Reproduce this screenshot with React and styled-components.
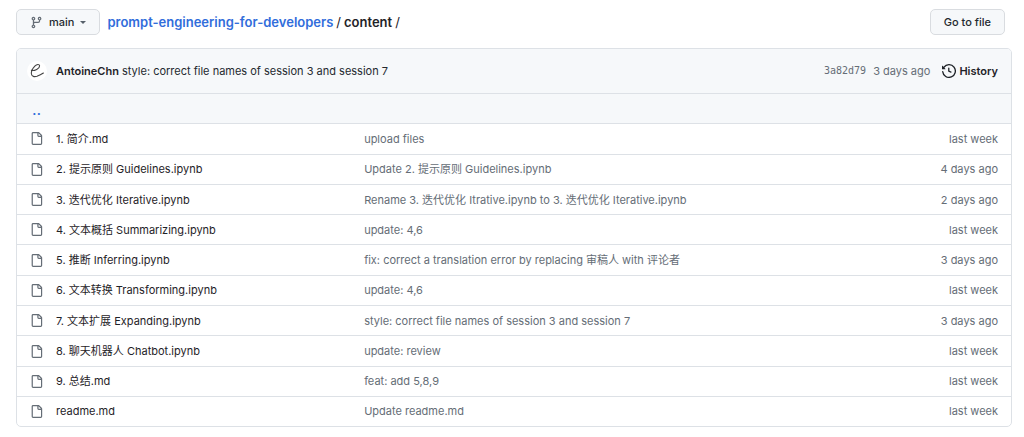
import React from 'react';
import styled, { createGlobalStyle } from 'styled-components';

const files = [
    { name: '1. 简介.md', message: 'upload files', age: 'last week' },
    { name: '2. 提示原则 Guidelines.ipynb', message: 'Update 2. 提示原则 Guidelines.ipynb', age: '4 days ago' },
    { name: '3. 迭代优化 Iterative.ipynb', message: 'Rename 3. 迭代优化 Itrative.ipynb to 3. 迭代优化 Iterative.ipynb', age: '2 days ago' },
    { name: '4. 文本概括 Summarizing.ipynb', message: 'update: 4,6', age: 'last week' },
    { name: '5. 推断 Inferring.ipynb', message: 'fix: correct a translation error by replacing 审稿人 with 评论者', age: '3 days ago' },
    { name: '6. 文本转换 Transforming.ipynb', message: 'update: 4,6', age: 'last week' },
    { name: '7. 文本扩展 Expanding.ipynb', message: 'style: correct file names of session 3 and session 7', age: '3 days ago' },
    { name: '8. 聊天机器人 Chatbot.ipynb', message: 'update: review', age: 'last week' },
    { name: '9. 总结.md', message: 'feat: add 5,8,9', age: 'last week' },
    { name: 'readme.md', message: 'Update readme.md', age: 'last week' },
];

const BranchIcon = () => (
    <Icon viewBox="0 0 16 16" $size={13} $color="#656d76" aria-hidden="true">
        <path d="M9.5 3.25a2.25 2.25 0 1 1 3 2.122V6A2.5 2.5 0 0 1 10 8.5H6a1 1 0 0 0-1 1v1.128a2.251 2.251 0 1 1-1.5 0V5.372a2.25 2.25 0 1 1 1.5 0v1.836A2.493 2.493 0 0 1 6 7h4a1 1 0 0 0 1-1v-.628A2.25 2.25 0 0 1 9.5 3.25Zm-6 0a.75.75 0 1 0 1.5 0 .75.75 0 0 0-1.5 0Zm8.25-.75a.75.75 0 1 0 0 1.5.75.75 0 0 0 0-1.5ZM4.25 12a.75.75 0 1 0 0 1.5.75.75 0 0 0 0-1.5Z" />
    </Icon>
);

const FileIcon = () => (
    <Icon viewBox="0 0 16 16" $size={13} $color="#656d76" aria-hidden="true">
        <path d="M2 1.75C2 .784 2.784 0 3.75 0h6.586c.464 0 .909.184 1.237.513l2.914 2.914c.329.328.513.773.513 1.237v9.586A1.75 1.75 0 0 1 13.25 16h-9.5A1.75 1.75 0 0 1 2 14.25Zm1.75-.25a.25.25 0 0 0-.25.25v12.5c0 .138.112.25.25.25h9.5a.25.25 0 0 0 .25-.25V6h-2.75A1.75 1.75 0 0 1 9 4.25V1.5Zm6.75.062V4.25c0 .138.112.25.25.25h2.688l-.011-.013-2.914-2.914-.013-.011Z" />
    </Icon>
);

const HistoryIcon = () => (
    <Icon viewBox="0 0 16 16" $size={14} $color="#1f2328" aria-hidden="true">
        <path d="m.427 1.927 1.215 1.215a8.002 8.002 0 1 1-1.6 5.685.75.75 0 1 1 1.493-.154 6.5 6.5 0 1 0 1.18-4.458l1.358 1.358A.25.25 0 0 1 3.896 6H.25A.25.25 0 0 1 0 5.75V2.104a.25.25 0 0 1 .427-.177ZM7.75 4a.75.75 0 0 1 .75.75v2.992l2.028.812a.75.75 0 0 1-.557 1.392l-2.5-1A.751.751 0 0 1 7 8.25v-3.5A.75.75 0 0 1 7.75 4Z" />
    </Icon>
);

const App = () => {
    return (
        <>
            <GlobalStyle />
            <Page>
                <Toolbar>
                    <Button type="button">
                        <BranchIcon />
                        main
                        <Caret />
                    </Button>
                    <Breadcrumb aria-label="Breadcrumb">
                        <a href="#repo">prompt-engineering-for-developers</a>
                        <span>/</span>
                        <strong>content</strong>
                        <span>/</span>
                    </Breadcrumb>
                    <Button type="button">Go to file</Button>
                </Toolbar>

                <Box>
                    <CommitBar>
                        <Avatar viewBox="0 0 20 20" role="img" aria-label="AntoineChn">
                            <circle cx="10" cy="10" r="10" />
                            <path d="M4.4 9.4C7.6 10 12.6 7.6 12.6 5C12.6 3 9.8 3 7.8 5.2C5.6 7.6 4 10.6 4.4 13C4.8 15.6 7.4 16 10 15.2C12.4 14.4 14.4 13.4 16.4 12" />
                        </Avatar>
                        <CommitText>
                            <Author href="#author">AntoineChn</Author>{' '}
                            <CommitLink href="#commit">style: correct file names of session 3 and session 7</CommitLink>
                        </CommitText>
                        <Hash href="#commit">3a82d79</Hash>
                        <CommitAge>3 days ago</CommitAge>
                        <History href="#history">
                            <HistoryIcon />
                            History
                        </History>
                    </CommitBar>

                    <Files>
                        <tbody>
                            <ParentRow>
                                <IconCell colSpan={4}>
                                    <ParentLink href="#parent">..</ParentLink>
                                </IconCell>
                            </ParentRow>
                            {files.map((file) => (
                                <tr key={file.name}>
                                    <IconCell><FileIcon /></IconCell>
                                    <NameCell><a href="#file">{file.name}</a></NameCell>
                                    <MessageCell><a href="#commit">{file.message}</a></MessageCell>
                                    <AgeCell>{file.age}</AgeCell>
                                </tr>
                            ))}
                        </tbody>
                    </Files>
                </Box>
            </Page>
        </>
    );
};


const GlobalStyle = createGlobalStyle`
  * {
    box-sizing: border-box;
  }

  body {
    margin: 0;
    background: #fff;
    color: #1f2328;
    font-family: Inter, "Noto Sans CJK SC", sans-serif;
    font-size: 11px;
    line-height: 16px;
  }

  a {
    color: inherit;
    text-decoration: none;

    &:hover {
      text-decoration: underline;
    }
  }
`;

const Icon = styled.svg`
  display: block;
  flex: none;
  width: ${({ $size }) => $size}px;
  height: ${({ $size }) => $size}px;
  fill: ${({ $color }) => $color};
`;

const Page = styled.main`
  padding: 9px 12px 9px 16px;
`;

const Toolbar = styled.div`
  display: flex;
  align-items: center;
  gap: 7px;
  padding-right: 7px;
  margin-bottom: 13px;
`;

const Button = styled.button`
  display: flex;
  align-items: center;
  gap: 6px;
  height: 26px;
  padding: 0 13px;
  border: 1px solid #d9dce0;
  border-radius: 5px;
  background: #f6f8fa;
  color: #24292f;
  font: inherit;
  font-weight: 500;
  cursor: pointer;
`;

const Caret = styled.span`
  border: 3px solid transparent;
  border-top-color: #57606a;
  border-bottom: 0;
`;

const Breadcrumb = styled.nav`
  display: flex;
  flex: 1;
  gap: 3px;
  font-size: 13px;

  a {
    color: #316ddb;
    font-weight: 600;
  }

  strong {
    font-weight: 600;
  }
`;

const Box = styled.section`
  border: 1px solid #dde1e6;
  border-radius: 5px;
  overflow: hidden;
`;

const CommitBar = styled.div`
  display: flex;
  align-items: center;
  height: 44px;
  padding: 0 13px 0 10px;
  background: #f6f8fa;
`;

const Avatar = styled.svg`
  flex: none;
  width: 20px;
  height: 20px;
  margin-right: 9px;

  circle {
    fill: #fff;
  }

  path {
    fill: none;
    stroke: #444;
    stroke-width: 1.1;
    stroke-linecap: round;
  }
`;

const CommitText = styled.div`
  flex: 1;
`;

const Author = styled.a`
  font-weight: 600;
`;

const CommitLink = styled.a`
  color: #24292f;
`;

const Hash = styled.a`
  margin-right: 7px;
  color: #656d76;
  font-family: "DejaVu Sans Mono", monospace;
  font-size: 10px;
`;

const CommitAge = styled.span`
  margin-right: 12px;
  color: #656d76;
`;

const History = styled.a`
  display: flex;
  align-items: center;
  gap: 3px;
  font-weight: 600;
`;

const Files = styled.table`
  width: 100%;
  height: 333px;
  border-collapse: collapse;

  td {
    padding: 0;
    border-top: 1px solid #dde1e6;
  }
`;

const ParentRow = styled.tr`
  background: #f6f8fa;
`;

const ParentLink = styled.a`
  display: block;
  width: 16px;
  padding-left: 2px;
  color: #316ddb;
  font-size: 16px;
  line-height: 16px;
`;

const IconCell = styled.td`
  width: 39px;

  && {
    padding-left: 13px;
  }
`;

const NameCell = styled.td`
  width: 31%;
`;

const MessageCell = styled.td`
  color: #656d76;
`;

const AgeCell = styled.td`
  width: 120px;
  color: #656d76;
  text-align: right;

  && {
    padding-right: 13px;
  }
`;

export default App;
